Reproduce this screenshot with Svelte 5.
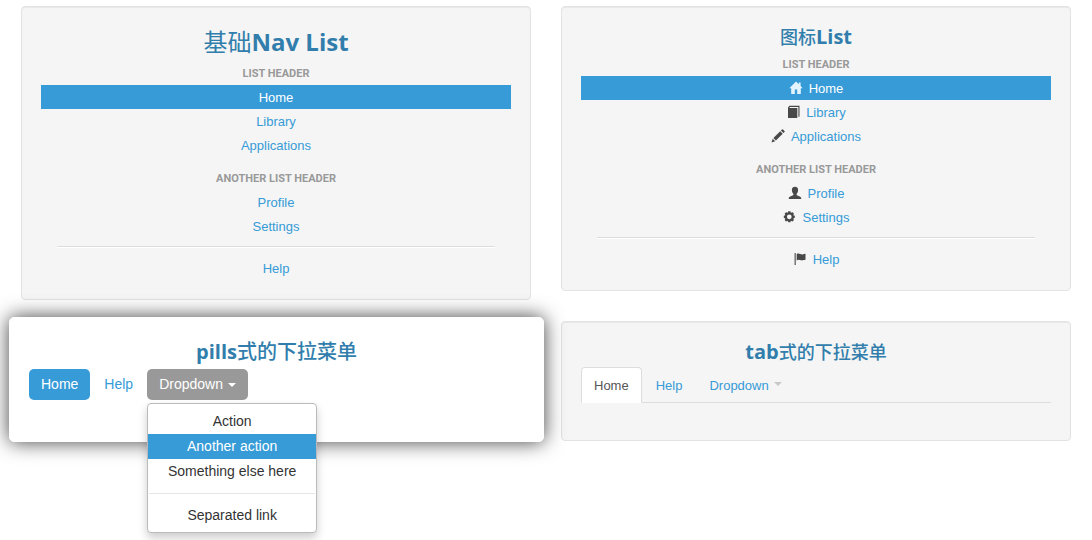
<script>
  const groups = [
    {
      title: 'List header',
      items: [
        { label: 'Home', icon: 'home', active: true },
        { label: 'Library', icon: 'book' },
        { label: 'Applications', icon: 'pencil' }
      ]
    },
    {
      title: 'Another list header',
      items: [
        { label: 'Profile', icon: 'user' },
        { label: 'Settings', icon: 'cog' }
      ]
    }
  ];
  const actions = ['Action', 'Another action', 'Something else here'];
  let open = $state(true);
  let selected = $state('Another action');
</script>

{#snippet glyph(name)}
  <svg class="icon" viewBox="0 0 14 14" aria-hidden="true">
    {#if name === 'home'}
      <path d="M7 0.5 0.3 7.2h1.9V13h3.6V8.5h2.4V13h3.6V7.2h1.9L11.6 5V1.5H9.9v1.8z" />
    {:else if name === 'book'}
      <path d="M2 2.4 3.4.8H13.5v11h-1.1V2H4l-.8.9h8.1v10.2H2z" />
    {:else if name === 'pencil'}
      <path d="M.5 13.5 1.7 9.8l2.5 2.5zM2.4 9.1 9.2 2.3l2.5 2.5-6.8 6.8zM9.9 1.6 11 .5q.5-.4 1 0L13.5 2q.4.5 0 1l-1.1 1.1z" />
    {:else if name === 'user'}
      <path d="M7 .8c2.2 0 3.2 1.5 3.1 3.4C10 6 9.3 7.2 8.6 7.9v1c.4.7 4.6 1.4 4.6 3.1v1H.8v-1c0-1.7 4.2-2.4 4.6-3.1v-1C4.7 7.2 4 6 3.9 4.2 3.8 2.3 4.8.8 7 .8z" />
    {:else if name === 'cog'}
      <path fill-rule="evenodd" d="M5.2 1.6h1.6l.5 1.2 1.3-.5 1.1 1.1-.5 1.3 1.2.5v1.6l-1.2.5.5 1.3-1.1 1.1-1.3-.5-.5 1.2H5.2l-.5-1.2-1.3.5-1.1-1.1.5-1.3-1.2-.5V5.2l1.2-.5-.5-1.3 1.1-1.1 1.3.5zM6 4.1a1.9 1.9 0 1 0 0 3.8 1.9 1.9 0 1 0 0-3.8z" transform="matrix(1.25 0 0 1.25 -1.2 -.7)" />
    {:else}
      <path d="M1.6 1h1.1v12H1.6zM3.7 2c2.4-1.6 4 .9 6 .4 1-.2 1.7-.8 2.8-.7v6.1c-2.3.1-2.7.9-4.4.5-1.5-.5-2.8-1.1-4.4.1z" />
    {/if}
  </svg>
{/snippet}

{#snippet navList(icons)}
  <nav class="nav-list">
    {#each groups as group}
      <h4>{group.title}</h4>
      <ul>
        {#each group.items as item}
          <li>
            <a href="#{item.icon}" class:active={item.active}>
              {#if icons}{@render glyph(item.icon)}{/if}{item.label}
            </a>
          </li>
        {/each}
      </ul>
    {/each}
    <hr />
    <ul>
      <li><a href="#help">{#if icons}{@render glyph('flag')}{/if}Help</a></li>
    </ul>
  </nav>
{/snippet}

<main>
  <div class="column">
    <section class="well">
      <h2><span>基础</span>Nav List</h2>
      {@render navList(false)}
    </section>

    <section class="well raised">
      <h3>pills<span>式的下拉菜单</span></h3>
      <ul class="pills">
        <li><a href="#home" class="active">Home</a></li>
        <li><a href="#help">Help</a></li>
        <li class="dropdown">
          <button type="button" aria-expanded={open} onclick={() => (open = !open)}>
            Dropdown<i class="caret"></i>
          </button>
          {#if open}
            <div class="menu">
              {#each actions as action}
                <a href="#action" class:active={selected === action} onmouseenter={() => (selected = action)}>{action}</a>
              {/each}
              <hr />
              <a href="#separated">Separated link</a>
            </div>
          {/if}
        </li>
      </ul>
    </section>
  </div>

  <div class="column">
    <section class="well">
      <h3><span>图标</span>List</h3>
      {@render navList(true)}
    </section>

    <section class="well">
      <h3>tab<span>式的下拉菜单</span></h3>
      <ul class="tabs">
        <li><a href="#home" class="active">Home</a></li>
        <li><a href="#help">Help</a></li>
        <li><button type="button">Dropdown<i class="caret"></i></button></li>
      </ul>
    </section>
  </div>
</main>

<style>
  :global(body) {
    background: #fff;
    font: 13px/18px "Liberation Sans", Arial, "Noto Sans CJK SC", sans-serif;
    color: #333;
  }
  main {
    box-sizing: border-box;
    display: grid;
    grid-template-columns: 1fr 1fr;
    align-items: start;
    gap: 30px;
    min-height: 100vh;
    padding: 6px 21px 0;
  }
  ul {
    list-style: none;
    margin: 0;
    padding: 0;
  }
  a {
    color: #369bd7;
    text-decoration: none;
  }
  button {
    font: inherit;
    border: 0;
    margin: 0;
    cursor: pointer;
  }
  .well {
    box-sizing: border-box;
    padding: 19px;
    border: 1px solid #e3e3e3;
    border-radius: 4px;
    background: #f5f5f5;
    box-shadow: inset 0 1px 1px rgba(0, 0, 0, 0.05);
    text-align: center;
  }
  .column .well + .well {
    margin-top: 30px;
    padding-bottom: 37px;
  }
  h2,
  h3 {
    margin: 0;
    padding-bottom: 4px;
    font-family: "Open Sans", "Noto Sans CJK SC", sans-serif;
    font-weight: 700;
    color: #317eac;
  }
  h2 {
    font-size: 24px;
    line-height: 31px;
  }
  h3 {
    font-size: 20px;
    line-height: 22px;
  }
  h2 span {
    font-weight: 400;
  }
  h3 span {
    font-size: 18px;
    font-weight: 500;
  }
  .nav-list {
    padding: 0 15px;
  }
  h4 {
    margin: 0;
    padding: 4px 0 2px;
    font-family: Roboto, "Liberation Sans", sans-serif;
    font-size: 11px;
    line-height: 18px;
    color: #999;
    text-transform: uppercase;
  }
  ul + h4 {
    margin-top: 9px;
  }
  .nav-list a {
    display: block;
    margin: 0 -15px;
    padding: 4px 15px 2px;
  }
  .nav-list a.active {
    background: #369bd7;
    color: #fff;
  }
  .nav-list hr {
    margin: 8px 1px;
    border: 0;
    border-top: 1px solid #dcdcdc;
    border-bottom: 1px solid #fff;
  }
  .icon {
    width: 14px;
    height: 14px;
    margin-right: 6px;
    vertical-align: -2px;
    fill: #484848;
  }
  .active .icon {
    fill: #e3f4ff;
  }
  .caret {
    display: inline-block;
    border: 4px solid transparent;
    border-top-color: currentColor;
    border-bottom: 0;
    margin-left: 5px;
    vertical-align: 2px;
  }
  .column .well.raised {
    margin: 17px -13px 0 -12px;
    padding: 20px 19px 41px;
    border-color: #fff;
    border-radius: 5px;
    background: #fff;
    box-shadow: 0 0 20px rgba(0, 0, 0, 0.75);
    position: relative;
  }
  .raised h3 {
    padding-bottom: 3px;
    line-height: 28px;
  }
  .raised h3 span {
    font-size: 20px;
  }
  .pills {
    display: flex;
    gap: 2px;
    font-size: 14px;
    line-height: 19px;
  }
  .pills > li > a,
  .pills button {
    display: block;
    padding: 6px 12px;
    border-radius: 5px;
  }
  .pills > li > a.active {
    background: #369bd7;
    color: #fff;
  }
  .pills button {
    background: #999;
    color: #fff;
  }
  .dropdown {
    position: relative;
  }
  .menu {
    position: absolute;
    top: 100%;
    left: 0;
    z-index: 1;
    width: 168px;
    margin-top: 3px;
    padding: 5px 0 4px;
    border: 1px solid #bbb;
    border-radius: 4px;
    background: #fff;
    box-shadow: 0 5px 10px rgba(0, 0, 0, 0.2);
  }
  .menu a {
    display: block;
    padding: 3px 0;
    color: #333;
  }
  .menu a.active {
    background: #369bd7;
    color: #fff;
  }
  .menu hr {
    margin: 9px 1px;
    border: 0;
    border-top: 1px solid #e5e5e5;
  }
  .tabs {
    display: flex;
    gap: 1px;
    border-bottom: 1px solid #ddd;
  }
  .tabs li {
    margin-bottom: -1px;
  }
  .tabs a,
  .tabs button {
    display: block;
    padding: 9px 12px 7px;
    border: 1px solid transparent;
    border-radius: 4px 4px 0 0;
    background: none;
    color: #369bd7;
  }
  .tabs a.active {
    border-color: #ddd;
    border-bottom-color: #fff;
    background: #fff;
    color: #555;
  }
  .tabs .caret {
    border-top-color: #c8c8c8;
    vertical-align: 4px;
  }
</style>
